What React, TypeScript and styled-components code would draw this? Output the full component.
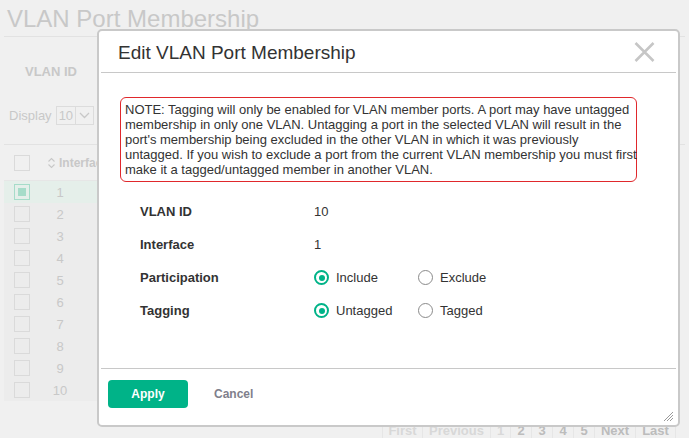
import React from 'react'
import styled, { createGlobalStyle } from 'styled-components'

const GlobalStyle = createGlobalStyle`
	html, body { margin: 0; padding: 0; }
	body {
		background: #f0f0f0;
		font-family: "Liberation Sans", Arial, sans-serif;
		width: 689px;
		height: 438px;
		overflow: hidden;
	}
`;

/* ---------- dimmed page behind the modal ---------- */
const Page = styled.div`
	position: relative;
	width: 689px;
	height: 438px;
	padding: 0 4px;
	box-sizing: border-box;
	color: #c8c8c8;
`;
const PageTitle = styled.h1`
	margin: 0;
	padding: 5px 0 0 3px;
	height: 37px;
	box-sizing: border-box;
	font-size: 24px;
	font-weight: normal;
	line-height: 28px;
	color: #c8c8c8;
	border-bottom: 1px solid #e2e2e2;
`;
const FilterLabel = styled.div`
	padding: 27px 0 0 21px;
	height: 40px;
	box-sizing: border-box;
	font-size: 13px;
	font-weight: bold;
	line-height: 16px;
`;
const DisplayRow = styled.div`
	display: flex;
	align-items: flex-start;
	gap: 4px;
	height: 68px;
	padding: 29px 0 0 5px;
	box-sizing: border-box;
	font-size: 13px;
	line-height: 19px;
	border-bottom: 1px solid #e2e2e2;
`;
const SelectBox = styled.div`
	display: flex;
	align-items: stretch;
	height: 19px;
	border: 1px solid #dcdcdc;
	box-sizing: border-box;
	span { padding: 0 2px; line-height: 17px; font-size: 13px; }
`;
const SelectArrow = styled.div`
	width: 17px;
	border-left: 1px solid #dcdcdc;
	display: flex;
	align-items: center;
	justify-content: center;
`;
const Table = styled.div`
	width: 300px;
	background: #ececec;
`;
const HeadRow = styled.div`
	display: flex;
	align-items: center;
	height: 35px;
	padding-left: 10px;
	background: #f0f0f0;
	border-bottom: 1px solid #e6e6e6;
	font-size: 12px;
	font-weight: bold;
	white-space: nowrap;
`;
const SortIcon = styled.svg`
	flex: none;
	margin: 0 3px 0 17px;
`;
const Check = styled.div<{ on?: boolean }>`
	width: 16px;
	height: 16px;
	box-sizing: border-box;
	border: 1px solid ${({ on }) => on ? '#a6dcc9' : '#dadada'};
	flex: none;
	display: flex;
	align-items: center;
	justify-content: center;
	&::after {
		content: '';
		display: ${({ on }) => on ? 'block' : 'none'};
		width: 8px;
		height: 8px;
		background: #a6dcc9;
	}
`;
const Row = styled.div<{ sel?: boolean }>`
	display: flex;
	align-items: center;
	height: 22px;
	padding-left: 10px;
	background: ${({ sel }) => sel ? '#e5efea' : '#ececec'};
	font-size: 13px;
	span { width: 48px; text-align: center; margin-left: 6px; }
`;
const Pager = styled.div`
	position: absolute;
	left: 382px;
	top: 415px;
	display: flex;
	height: 24px;
	border-left: 1px solid #e6e6e6;
`;
const PageCell = styled.div<{ dark?: boolean; w: number }>`
	width: ${({ w }) => w}px;
	border-right: 1px solid #e6e6e6;
	text-align: center;
	font-size: 13px;
	font-weight: bold;
	line-height: 22px;
	padding-top: 5px;
	color: ${({ dark }) => dark ? '#bcbcbc' : '#d8d8d8'};
`;

/* ---------- modal ---------- */
const Modal = styled.div`
	position: absolute;
	left: 97px;
	top: 29px;
	width: 583px;
	height: 398px;
	box-sizing: border-box;
	background: #fff;
	border: 2px solid #c9c9c9;
	border-radius: 5px;
	display: flex;
	flex-direction: column;
	color: #333;
`;
const Header = styled.div`
	display: flex;
	align-items: center;
	justify-content: space-between;
	height: 41px;
	margin: 0 2px;
	padding: 0 21px 0 17px;
	border-bottom: 1px solid #c8c8c8;
`;
const Title = styled.h4`
	margin: 0;
	font-size: 19px;
	font-weight: normal;
	color: #333;
	padding-top: 2px;
`;
const Body = styled.div`
	flex: 1;
	padding: 24px 0 0 21px;
`;
const Note = styled.div`
	width: 517px;
	box-sizing: border-box;
	border: 1px solid #e0282c;
	border-radius: 6px;
	padding: 4px;
	font-size: 13px;
	line-height: 15px;
	color: #333;
	white-space: nowrap;
`;
const Form = styled.div`
	padding: 13px 0 0 20px;
`;
const FormRow = styled.div`
	display: flex;
	align-items: center;
	height: 33px;
	font-size: 13px;
`;
const Label = styled.div`
	width: 174px;
	font-weight: bold;
	color: #333;
`;
const Value = styled.div`
	display: flex;
	align-items: center;
`;
const RadioOption = styled.label`
	display: flex;
	align-items: center;
	gap: 7px;
	width: 104px;
	color: #333;
`;
const RadioDot = styled.span<{ on?: boolean }>`
	width: 15px;
	height: 15px;
	box-sizing: border-box;
	border-radius: 50%;
	border-style: solid;
	border-color: ${({ on }) => on ? '#00b388' : '#8a8a8a'};
	border-width: ${({ on }) => on ? '2px' : '1.5px'};
	display: flex;
	align-items: center;
	justify-content: center;
	&::after {
		content: '';
		display: ${({ on }) => on ? 'block' : 'none'};
		width: 6px;
		height: 6px;
		border-radius: 50%;
		background: #00b388;
	}
`;
const Footer = styled.div`
	position: relative;
	margin: 0 2px;
	border-top: 1px solid #c8c8c8;
	height: 57px;
	padding: 11px 0 0 7px;
	box-sizing: border-box;
	display: flex;
	align-items: flex-start;
	gap: 26px;
`;
const ApplyButton = styled.button`
	width: 80px;
	height: 28px;
	border: none;
	border-radius: 4px;
	background: #00b388;
	color: #fff;
	font-family: inherit;
	font-size: 12px;
	font-weight: bold;
`;
const CancelButton = styled.button`
	height: 28px;
	border: none;
	background: none;
	padding: 0;
	color: #7f7f8c;
	font-family: inherit;
	font-size: 12px;
	font-weight: bold;
`;
const Grip = styled.svg`
	position: absolute;
	right: 2px;
	bottom: 3px;
`;

const Radio = ({ on, label }: { on?: boolean; label: string }) => (
	<RadioOption>
		<RadioDot on={on} />
		{label}
	</RadioOption>
);

const rows = [1, 2, 3, 4, 5, 6, 7, 8, 9, 10];
const pages: [string, number, boolean?][] = [
	['First', 39], ['Previous', 67], ['1', 19], ['2', 20, true], ['3', 20, true],
	['4', 20, true], ['5', 20, true], ['Next', 40, true], ['Last', 39, true],
];

export default function App() {
	return (
		<>
			<GlobalStyle />
			<Page>
				<PageTitle>VLAN Port Membership</PageTitle>
				<FilterLabel>VLAN ID</FilterLabel>
				<DisplayRow>
					Display
					<SelectBox>
						<span>10</span>
						<SelectArrow>
							<svg width="11" height="7" viewBox="0 0 11 7">
								<path d="M1 1l4.5 4.5L10 1" fill="none" stroke="#c8c8c8" strokeWidth="1.3" />
							</svg>
						</SelectArrow>
					</SelectBox>
				</DisplayRow>
				<Table>
					<HeadRow>
						<Check />
						<SortIcon width="9" height="12" viewBox="0 0 9 12">
							<path d="M1.5 4.5L4.5 1.5 7.5 4.5M1.5 7.5l3 3 3-3" fill="none" stroke="#c8c8c8" strokeWidth="1.1" />
						</SortIcon>
						Interface
					</HeadRow>
					{rows.map(n => (
						<Row key={n} sel={n === 1}>
							<Check on={n === 1} />
							<span>{n}</span>
						</Row>
					))}
				</Table>
				<Pager>
					{pages.map(([t, w, d]) => (
						<PageCell key={t} w={w} dark={d}>{t}</PageCell>
					))}
				</Pager>
			</Page>

			<Modal>
				<Header>
					<Title>Edit VLAN Port Membership</Title>
					<svg width="21" height="20" viewBox="0 0 21 20">
						<path d="M1.5 1l18 18M19.5 1l-18 18" stroke="#c6c6c6" strokeWidth="2.6" />
					</svg>
				</Header>
				<Body>
					<Note>
						NOTE: Tagging will only be enabled for VLAN member ports. A port may have untagged<br />
						membership in only one VLAN. Untagging a port in the selected VLAN will result in the<br />
						port's membership being excluded in the other VLAN in which it was previously<br />
						untagged. If you wish to exclude a port from the current VLAN membership you must first<br />
						make it a tagged/untagged member in another VLAN.
					</Note>
					<Form>
						<FormRow>
							<Label>VLAN ID</Label>
							<Value>10</Value>
						</FormRow>
						<FormRow>
							<Label>Interface</Label>
							<Value>1</Value>
						</FormRow>
						<FormRow>
							<Label>Participation</Label>
							<Value>
								<Radio on label="Include" />
								<Radio label="Exclude" />
							</Value>
						</FormRow>
						<FormRow>
							<Label>Tagging</Label>
							<Value>
								<Radio on label="Untagged" />
								<Radio label="Tagged" />
							</Value>
						</FormRow>
					</Form>
				</Body>
				<Footer>
					<ApplyButton>Apply</ApplyButton>
					<CancelButton>Cancel</CancelButton>
					<Grip width="12" height="12" viewBox="0 0 12 12">
						<path d="M11 2L2 11M11 5L5 11M11 8L8 11" stroke="#9a9a9a" strokeWidth="1" />
					</Grip>
				</Footer>
			</Modal>
		</>
	);
}
